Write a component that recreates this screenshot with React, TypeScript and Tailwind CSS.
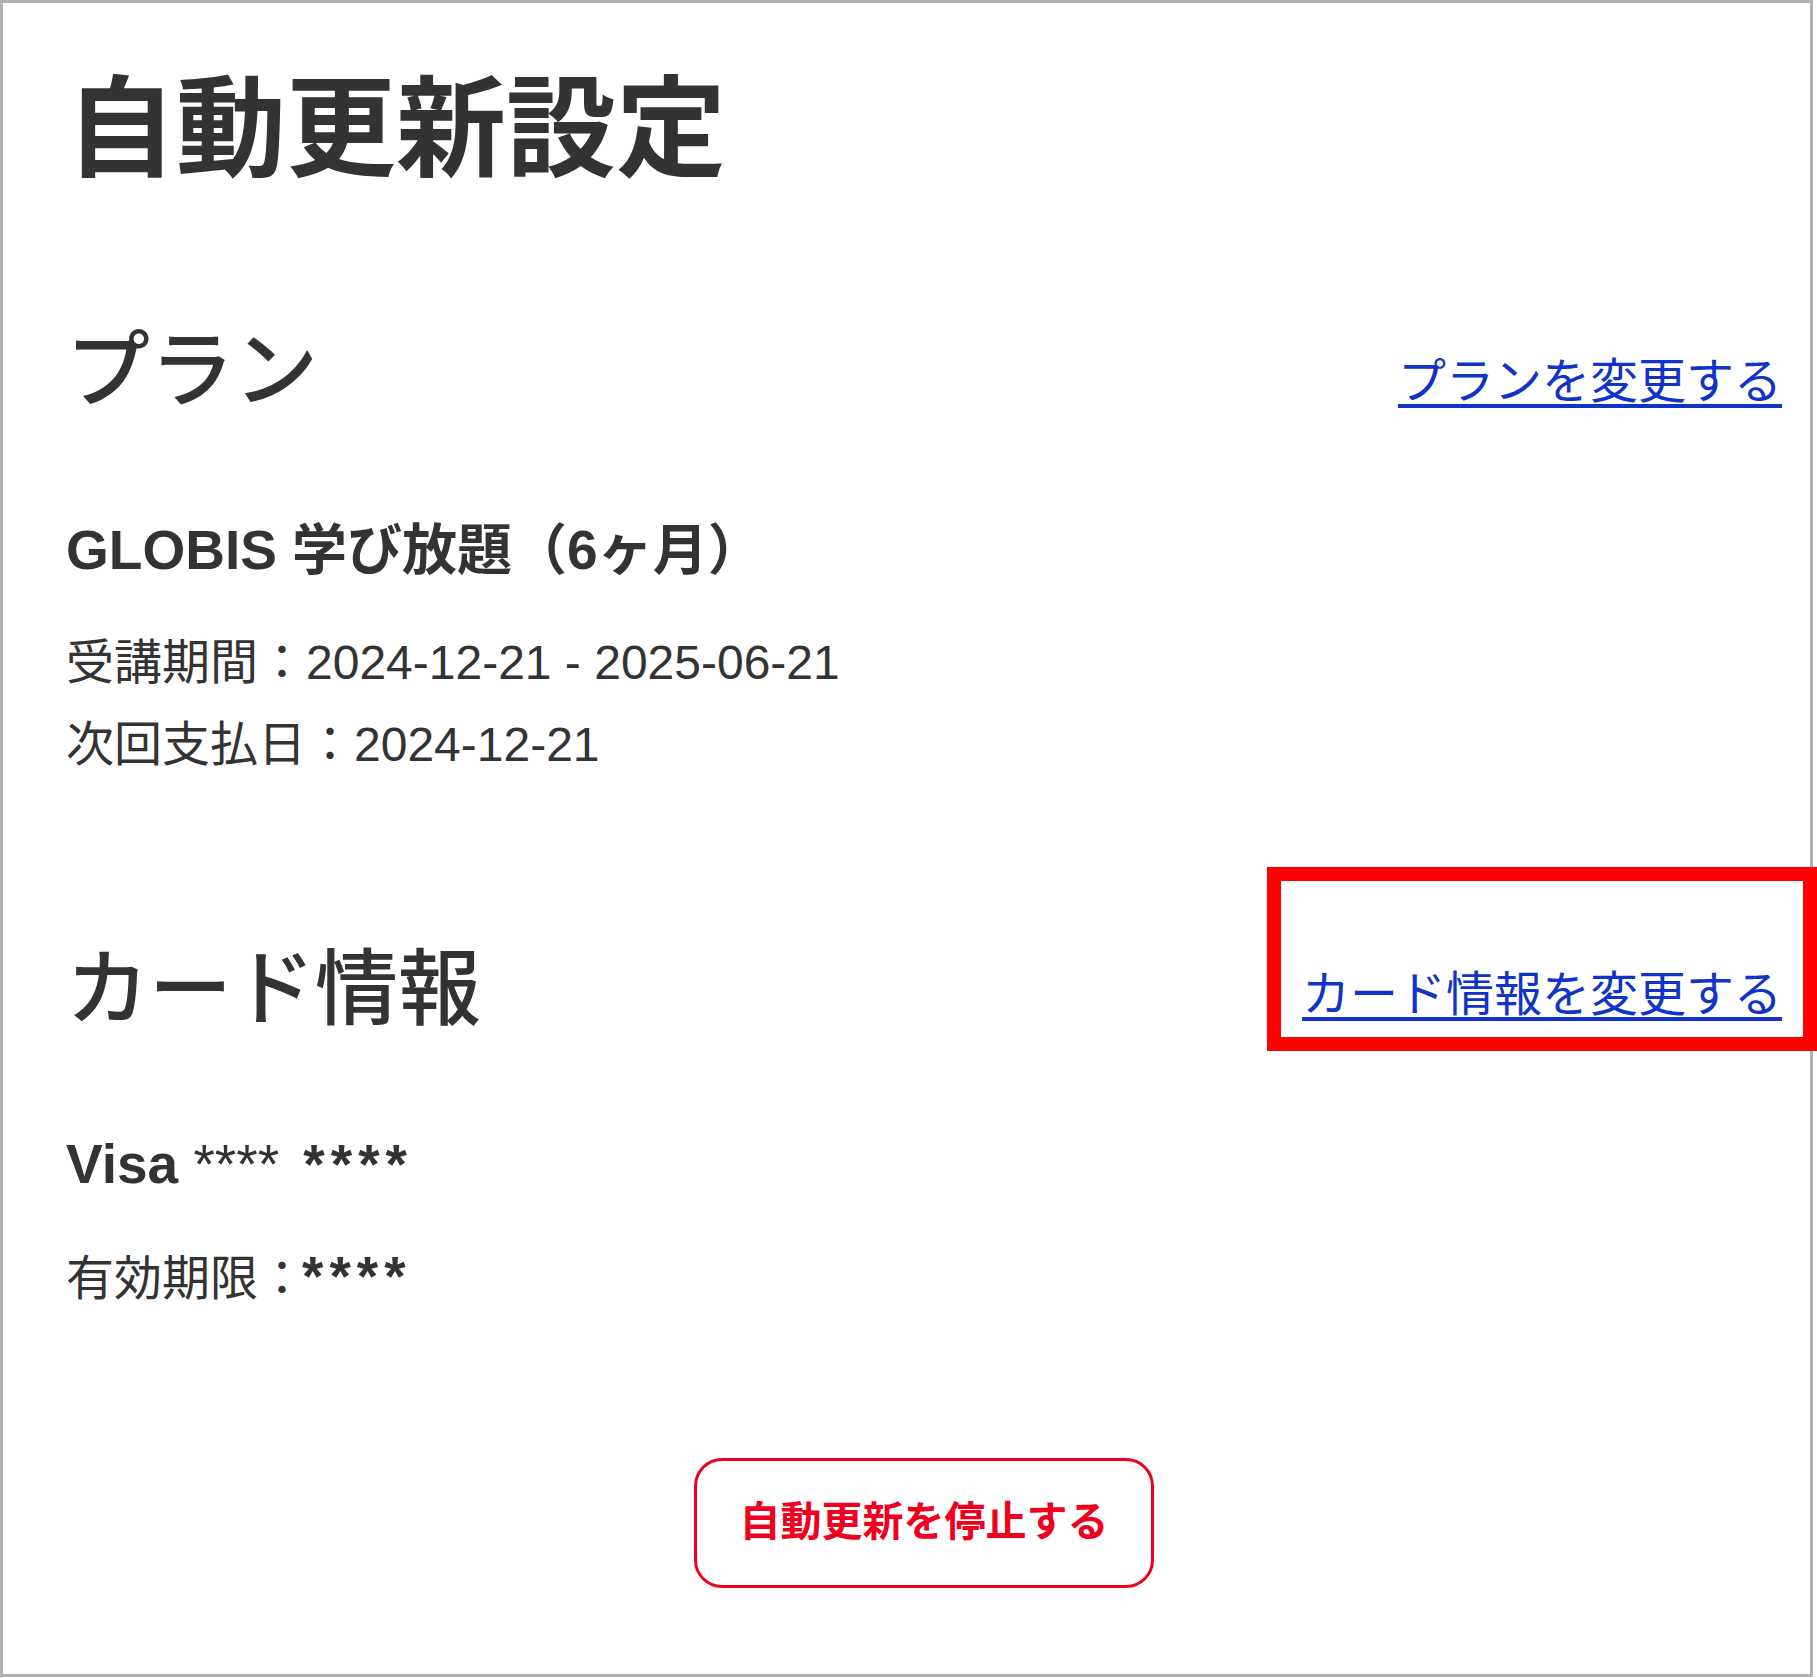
const font = "font-['Liberation_Sans','Noto_Sans_CJK_JP',sans-serif]";

/**
 * PlanSection - current subscription plan details
 */
function PlanSection() {
    return (
        <section className="mt-[125px]">
            <div className="flex items-center justify-between">
                <h2 className="text-[84px] leading-[100px] font-medium">プラン</h2>
                <a href="#plan" className="mt-[22px] text-[48px] leading-[60px] text-[#1033c8] underline underline-offset-[6px]">
                    プランを変更する
                </a>
            </div>
            <p className="mt-[94px] text-[55px] leading-[70px] font-bold">GLOBIS 学び放題（6ヶ月）</p>
            <div className="mt-[37px] text-[48px] leading-[82px]">
                <p>受講期間：2024-12-21 - 2025-06-21</p>
                <p>次回支払日：2024-12-21</p>
            </div>
        </section>
    );
}

/**
 * CardSection - registered credit card details
 */
function CardSection() {
    return (
        <section className="mt-[154px]">
            <div className="flex items-center justify-between">
                <h2 className="text-[83px] leading-[100px] font-medium">カード情報</h2>
                <a href="#card" className="mt-[10px] text-[48px] leading-[60px] text-[#1033c8] underline underline-offset-[6px]">
                    カード情報を変更する
                </a>
            </div>
            <p className="mt-[89px] text-[55px] leading-[70px]">
                <span className="font-bold">Visa</span> ****{' '}
                <span className="ml-[9px] font-bold tracking-[6px]">****</span>
            </p>
            <p className="mt-[39px] text-[48px] leading-[82px]">
                有効期限：<span className="ml-[-4px] text-[55px] leading-none font-bold tracking-[6px]">****</span>
            </p>
        </section>
    );
}

export default function App() {
    return (
        <div className={`relative w-[1817px] h-[1678px] bg-white text-[#333] ${font}`}>
            <div className="w-[1813px] h-[1677px] border-[3px] border-[#b3b0b0] pt-[61px] pl-[63px] pr-[28px]">
                <h1 className="text-[110px] leading-[132px] font-bold">自動更新設定</h1>

                <PlanSection />
                <CardSection />

                <div className="mt-[138px] flex justify-center">
                    <button className="w-[460px] h-[130px] rounded-[28px] border-[3px] border-[#f0001e] text-[41px] font-bold text-[#f0001e]">
                        自動更新を停止する
                    </button>
                </div>
            </div>

            {/* Annotation highlight */}
            <div className="absolute left-[1267px] top-[867px] w-[550px] h-[184px] border-[14px] border-[#ff0000]" />
        </div>
    );
}
